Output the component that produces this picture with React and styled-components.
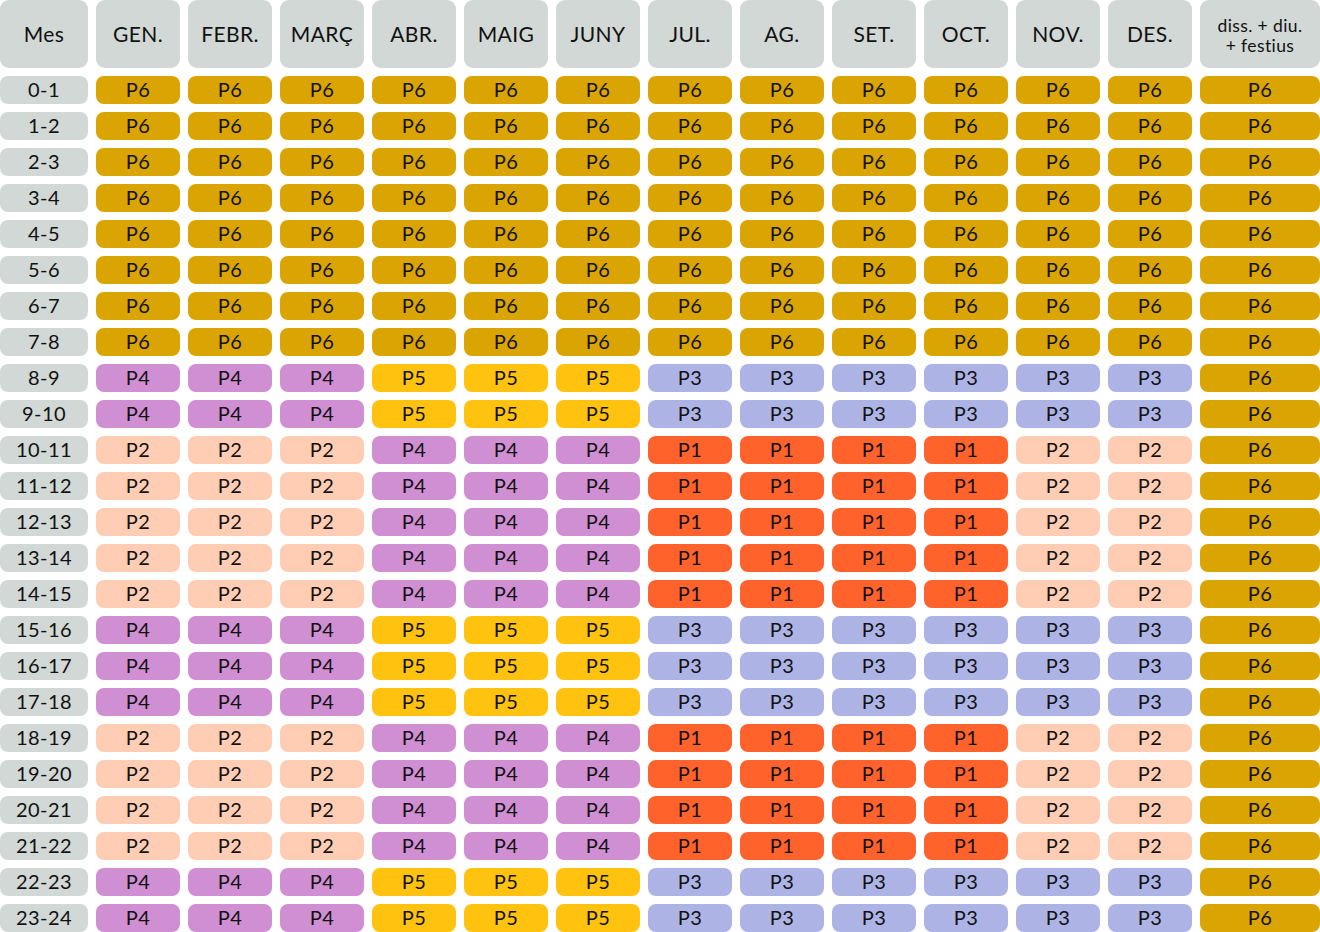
import React from "react";
import styled, { createGlobalStyle } from "styled-components";

const Global = createGlobalStyle`
  html, body { margin: 0; padding: 0; background: #fff; }
  body { font-family: Lato, "Noto Sans", sans-serif; color: #111; }
`;

const Grid = styled.div`
  display: grid;
  grid-template-columns: 88px repeat(12, 84px) 120px;
  grid-template-rows: 68px;
  grid-auto-rows: 28px;
  gap: 8px;
  width: 1320px;
`;

const HeadCell = styled.div`
  background: #d1d8d5;
  border-radius: 9px;
  display: flex;
  align-items: center;
  justify-content: center;
  text-align: center;
  font-size: ${(p) => (p.$small ? "17.5px" : "21px")};
  line-height: ${(p) => (p.$small ? "20px" : "24px")};
  padding: ${(p) => (p.$small ? "3px 0 0" : "0 0 1px")};
  box-sizing: border-box;
  letter-spacing: 0.4px;
`;

const HourCell = styled.div`
  background: #d1d8d5;
  border-radius: 8px;
  display: flex;
  align-items: center;
  justify-content: center;
  font-size: 20px;
  line-height: 24px;
  letter-spacing: 0.4px;
  padding-bottom: 3px;
  box-sizing: border-box;
`;

const COLORS = {
  P1: "#ff632b",
  P2: "#ffcdb4",
  P3: "#adb4e5",
  P4: "#d08fd3",
  P5: "#ffc20f",
  P6: "#daa503",
};

const Period = styled.div`
  background: ${(p) => COLORS[p.$p]};
  border-radius: 8px;
  display: flex;
  align-items: center;
  justify-content: center;
  font-size: 20px;
  line-height: 24px;
  letter-spacing: 0.4px;
  padding-bottom: 3px;
  box-sizing: border-box;
`;

const months = ["GEN.", "FEBR.", "MARÇ", "ABR.", "MAIG", "JUNY", "JUL.", "AG.", "SET.", "OCT.", "NOV.", "DES."];

const ALL6 = Array(13).fill("P6");
const A = ["P4", "P4", "P4", "P5", "P5", "P5", "P3", "P3", "P3", "P3", "P3", "P3", "P6"];
const B = ["P2", "P2", "P2", "P4", "P4", "P4", "P1", "P1", "P1", "P1", "P2", "P2", "P6"];

const pattern = [
  ALL6, ALL6, ALL6, ALL6, ALL6, ALL6, ALL6, ALL6,
  A, A,
  B, B, B, B, B,
  A, A, A,
  B, B, B, B,
  A, A,
];

export default function App() {
  return (
    <>
      <Global />
      <Grid>
        <HeadCell>Mes</HeadCell>
        {months.map((m) => (
          <HeadCell key={m}>{m}</HeadCell>
        ))}
        <HeadCell $small>
          diss. + diu.
          <br />+ festius
        </HeadCell>
        {pattern.map((row, i) => (
          <React.Fragment key={i}>
            <HourCell>{`${i}-${i + 1}`}</HourCell>
            {row.map((p, j) => (
              <Period key={j} $p={p}>
                {p}
              </Period>
            ))}
          </React.Fragment>
        ))}
      </Grid>
    </>
  );
}
